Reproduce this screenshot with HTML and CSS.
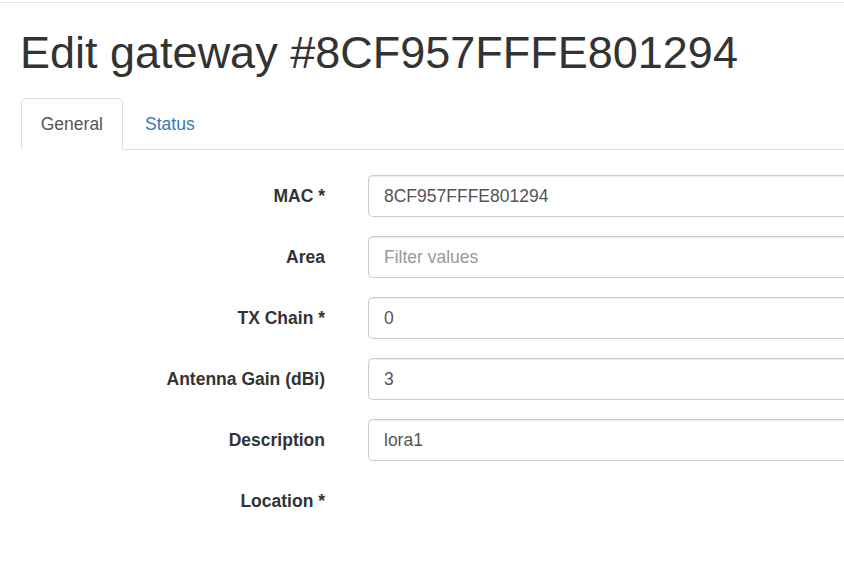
FILE: index.html
```html
<!DOCTYPE html>
<html>
<head>
<meta charset="utf-8">
<title>Edit gateway</title>
<link rel="stylesheet" href="styles.css">
</head>
<body>
<div class="topbar"></div>
<div class="container">
  <h1 class="title">Edit gateway #8CF957FFFE801294</h1>
  <ul class="tabs">
    <li class="tab active"><a href="#">General</a></li>
    <li class="tab"><a href="#">Status</a></li>
  </ul>
  <form class="form">
    <div class="row">
      <label class="label">MAC *</label>
      <input class="input" type="text" value="8CF957FFFE801294">
    </div>
    <div class="row">
      <label class="label">Area</label>
      <input class="input" type="text" placeholder="Filter values">
    </div>
    <div class="row">
      <label class="label">TX Chain *</label>
      <input class="input" type="text" value="0">
    </div>
    <div class="row">
      <label class="label">Antenna Gain (dBi)</label>
      <input class="input" type="text" value="3">
    </div>
    <div class="row">
      <label class="label">Description</label>
      <input class="input" type="text" value="lora1">
    </div>
    <div class="row">
      <label class="label">Location *</label>
      <div></div>
    </div>
  </form>
</div>
</body>
</html>
```

FILE: styles.css
```css
html, body {
  margin: 0;
  padding: 0;
  background: #fff;
}
body {
  font-family: "Liberation Sans", Arial, sans-serif;
  font-size: 17.5px;
  line-height: 25px;
  color: #333;
}
.topbar {
  height: 2px;
  border-bottom: 1px solid #e7e7e7;
}
.container {
  padding-left: 21px;
}
.title {
  margin: 25px 0 0 -1px;
  font-size: 45px;
  font-weight: normal;
  line-height: 50px;
  color: #333;
}
.tabs {
  list-style: none;
  margin: 20px 0 0;
  padding: 0;
  display: flex;
  border-bottom: 1px solid #ddd;
}
.tab {
  margin-bottom: -1px;
}
.tab a {
  display: block;
  padding: 13px 18.75px 12px;
  margin-right: 2.5px;
  line-height: 25px;
  border: 1px solid transparent;
  border-radius: 5px 5px 0 0;
  color: #337ab7;
  text-decoration: none;
}
.tab.active a {
  color: #555;
  background: #fff;
  border-color: #ddd #ddd transparent;
}
.form {
  padding-top: 25px;
  display: flex;
  flex-direction: column;
  gap: 19px;
}
.row {
  display: grid;
  grid-template-columns: 304px 1fr;
  column-gap: 43px;
}
.label {
  text-align: right;
  font-weight: bold;
  padding-top: 8.5px;
  line-height: 25px;
}
.input {
  box-sizing: border-box;
  width: 100%;
  height: 42px;
  padding: 0 15px;
  font-family: "Liberation Sans", Arial, sans-serif;
  font-size: 17.5px;
  color: #555;
  border: 1px solid #ccc;
  border-right: none;
  border-radius: 5px 0 0 5px;
  box-shadow: inset 0 1px 1px rgba(0,0,0,.075);
  background: #fff;
  outline: none;
}
.input::placeholder {
  color: #999;
}
```
